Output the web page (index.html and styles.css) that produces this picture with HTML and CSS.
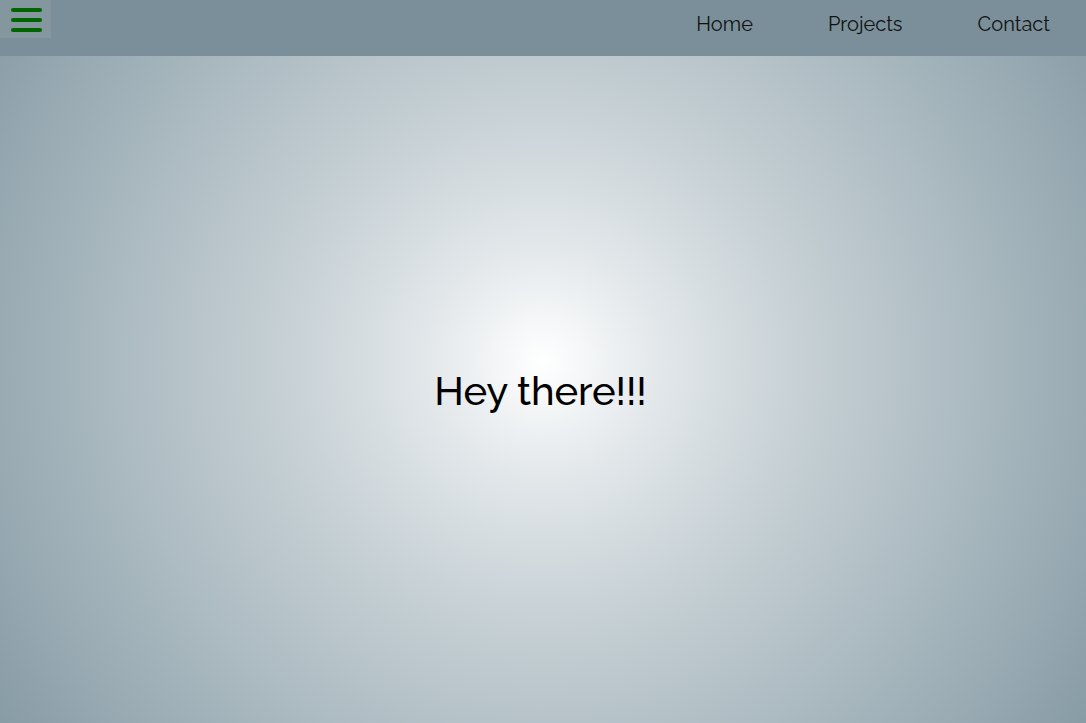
FILE: index.html
```html
<!DOCTYPE html>
<html>
<head>
<meta charset="utf-8">
<link rel="stylesheet" href="styles.css">
</head>
<body>
<header class="topbar">
  <button class="menu-btn" aria-label="Menu">
    <span class="bar"></span><span class="bar"></span><span class="bar"></span>
  </button>
  <nav class="nav">
    <a class="nav-link" href="#">Home</a>
    <a class="nav-link" href="#">Projects</a>
    <a class="nav-link" href="#">Contact</a>
  </nav>
</header>
<main class="hero">
  <h1 class="title">Hey there!!!</h1>
</main>
</body>
</html>
```
FILE: styles.css
```css
* { box-sizing: border-box; }
html, body { margin: 0; height: 100%; }
body {
  font-family: Raleway, Lato, "Open Sans", sans-serif;
  display: flex;
  flex-direction: column;
  background: radial-gradient(circle at 50% 50%, #ffffff 0%, #e2e7ea 18%, #c6d0d5 40%, #a9b8bf 68%, #889ca6 100%);
}
.topbar {
  height: 56px;
  flex: none;
  background: #7a8f99;
  display: flex;
  align-items: flex-start;
  justify-content: space-between;
}
.menu-btn {
  width: 51px;
  height: 38px;
  background: #84979f;
  border: none;
  padding: 8px 0 0 11px;
  display: flex;
  flex-direction: column;
  gap: 6px;
  margin: 0;
}
.bar {
  display: block;
  width: 31px;
  height: 4px;
  border-radius: 2px;
  background: #006400;
}
.nav {
  display: flex;
  gap: 75px;
  padding: 12px 36px 0 0;
}
.nav-link {
  color: #111;
  text-decoration: none;
  font-size: 20px;
  font-weight: 400;
}
.hero {
  flex: 1;
  display: flex;
  align-items: center;
  justify-content: center;
  padding-right: 5px;
}
.title {
  margin: 0;
  font-size: 40px;
  font-weight: 500;
  letter-spacing: -0.1px;
  color: #000;
  transform: translateY(1px);
}
```
